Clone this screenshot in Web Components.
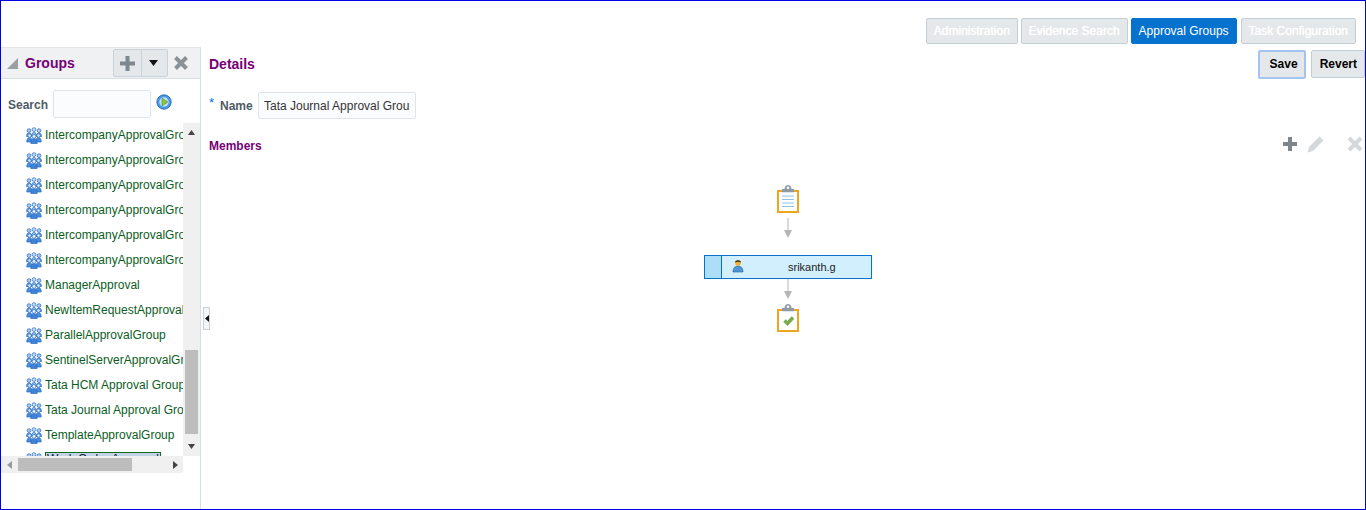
<!DOCTYPE html>
<html>
<head>
<meta charset="utf-8">
<title>Approval Groups</title>
<style>
  html, body { margin: 0; padding: 0; background: #fff; }
  body { font-family: "Liberation Sans", Arial, sans-serif; font-size: 12px; color: #333; }
</style>
</head>
<body>
<approval-app></approval-app>
<script>
const groupIcon = `<svg width="16" height="17" viewBox="0 0 16 17">
  <g stroke="#2a6cc0" stroke-width=".7">
    <path d="M.5 9.500c0-2.500 1-3.500 2.500-3.500s2.500 1 2.500 3.500z" fill="#6aa4e6"/>
    <path d="M10.500 9.500c0-2.500 1-3.500 2.500-3.500s2.500 1 2.500 3.500z" fill="#6aa4e6"/>
    <path d="M5.500 9c0-2.500 1-3.500 2.500-3.500s2.500 1 2.500 3.500z" fill="#8dbcf0"/>
    <circle cx="3" cy="3.600" r="1.900" fill="#a5c8f0"/>
    <circle cx="13" cy="3.600" r="1.900" fill="#a5c8f0"/>
    <circle cx="8" cy="2.600" r="1.900" fill="#c5dcf5"/>
    <path d="M.8 15c0-3 1-4.500 2.700-4.500s2.700 1.500 2.700 4.500z" fill="#4a8cdc"/>
    <path d="M9.800 15c0-3 1-4.500 2.700-4.500s2.700 1.500 2.700 4.500z" fill="#4a8cdc"/>
    <path d="M4.800 16.500c0-3.500 1.200-5 3.200-5s3.200 1.500 3.200 5z" fill="#3f83d6"/>
    <circle cx="3.500" cy="8.600" r="1.800" fill="#d4e6f8"/>
    <circle cx="12.500" cy="8.600" r="1.800" fill="#d4e6f8"/>
    <circle cx="8" cy="9.400" r="1.900" fill="#e6f1fb"/>
  </g></svg>`;

class AppTab extends HTMLElement {
  constructor() {
    super();
    this.attachShadow({ mode: "open" }).innerHTML = `
<style>
  :host { display: block; height: 26px; box-sizing: border-box; padding: 0 7px; border: 1px solid #c4ced7; border-radius: 2px;
    background: #e4e8ea; color: #fff; font: 12px/24px "Liberation Sans", Arial, sans-serif; white-space: nowrap; text-shadow: 0 0 1px #fff; }
  :host([active]) { background: #0572ce; border-color: #0572ce; color: #fff; text-shadow: none; }
  :host(:last-child) { margin-left: 1px; }
</style><slot></slot>`;
  }
}
customElements.define("app-tab", AppTab);

class AppButton extends HTMLElement {
  constructor() {
    super();
    this.attachShadow({ mode: "open" }).innerHTML = `
<style>
  :host { display: block; height: 28px; box-sizing: border-box; padding: 0 7px 0 8px; border: 1px solid #c4ced7; border-radius: 2px;
    background: #e4e8ea; color: #000; font: bold 12px/26px "Liberation Sans", Arial, sans-serif; }
  :host([focused]) { height: 29px; border: 2px solid #a3c4f0; line-height: 25px; padding: 0 6px 0 10px; }
</style><slot></slot>`;
  }
}
customElements.define("app-button", AppButton);

class GroupRow extends HTMLElement {
  constructor() {
    super();
    this.attachShadow({ mode: "open" }).innerHTML = `
<style>
  :host { display: flex; align-items: center; height: 25px; padding-left: 25px; gap: 3px; white-space: nowrap; color: #0b5d1e;
    font: 12px "Liberation Sans", Arial, sans-serif; flex: none; }
  svg { display: block; flex: none; }
  span { display: block; margin-bottom: 2px; }
  :host([selected]) span { align-self: flex-start; margin: 4px 0 0; width: 116px; height: 18px; box-sizing: border-box; border: 1px solid #0b6b1e; background: #c3d3e6; color: #123; padding-left: 1px; line-height: 13px; overflow: hidden; }
</style>${groupIcon}<span><slot></slot></span>`;
  }
}
customElements.define("group-row", GroupRow);

class GroupsPanel extends HTMLElement {
  constructor() {
    super();
    const names = [
      "IntercompanyApprovalGroup1", "IntercompanyApprovalGroup2", "IntercompanyApprovalGroup3",
      "IntercompanyApprovalGroup4", "IntercompanyApprovalGroup5", "IntercompanyApprovalGroup6",
      "ManagerApproval", "NewItemRequestApprovalGroup", "ParallelApprovalGroup",
      "SentinelServerApprovalGroup", "Tata HCM Approval Group", "Tata Journal Approval Group",
      "TemplateApprovalGroup"
    ];
    this.attachShadow({ mode: "open" }).innerHTML = `
<style>
  :host { display: flex; flex-direction: column; width: 200px; box-sizing: border-box; border-right: 1px solid #d6dfe6; flex: none; font: 12px "Liberation Sans", Arial, sans-serif; }
  .head { display: flex; align-items: center; height: 32px; box-sizing: border-box; background: #f0f1f2; border-top: 1px solid #e2e5e8; border-bottom: 1px solid #d6dfe6; flex: none; }
  .tri { margin: 0 0 0 6px; }
  h2 { margin: 0 0 0 7px; font: bold 14px "Liberation Sans", Arial, sans-serif; color: #770077; width: 88px; }
  .tools { display: flex; width: 55px; height: 28px; box-sizing: border-box; border: 1px solid #c9d2da; border-radius: 2px; background: #e4e8ea; }
  .tools div { display: flex; align-items: center; justify-content: center; }
  .tools div:first-child { width: 27px; border-right: 1px solid #c9d2da; }
  .tools div:last-child { flex: 1; padding-right: 2px; }
  .close { margin-left: 5px; display: block; }
  .search { display: flex; align-items: center; height: 44px; box-sizing: border-box; padding: 11px 0 5px 7px; flex: none; }
  .search label { font-weight: bold; color: #4f5a66; width: 45px; padding-top: 2px; }
  .search .box { width: 98px; height: 28px; box-sizing: border-box; border: 1px solid #dfe4ea; border-radius: 2px; background: #fbfcfe; }
  .search svg { margin-left: 5px; margin-top: -4px; }
  .listwrap { display: flex; height: 333px; flex: none; }
  .list { width: 182px; overflow: hidden; display: flex; flex-direction: column; flex: none; }
  .vbar { width: 17px; background: #f0f0f0; display: flex; flex-direction: column; align-items: center; flex: none; }
  .vbar .up { height: 227px; width: 100%; flex: none; }
  .vbar .thumb { width: 13px; height: 84px; background: #bdbdbd; flex: none; }
  .hbar { display: flex; align-items: center; width: 182px; height: 17px; background: #f0f0f0; flex: none; }
  .hbar .thumb { width: 114px; height: 13px; background: #bdbdbd; margin-left: 6px; }
  .arr { flex: none; display: block; }
</style>
<div class="head">
  <svg class="tri" width="11" height="11" viewBox="0 0 11 11"><path d="M11 0v11H0z" fill="#9a9fa4"/></svg>
  <h2>Groups</h2>
  <div class="tools">
    <div><svg width="15" height="15" viewBox="0 0 15 15"><path d="M5.500 0h4v5.500H15v4H9.500V15h-4V9.500H0v-4h5.500z" fill="#7f878e"/></svg></div>
    <div><svg width="9" height="6" viewBox="0 0 9 6"><path d="M0 0h9L4.500 6z" fill="#111"/></svg></div>
  </div>
  <svg class="close" width="16" height="16" viewBox="0 0 16 16"><path d="M2.500 2.500l11 11M13.500 2.500l-11 11" stroke="#8a9197" stroke-width="4"/></svg>
</div>
<div class="search">
  <label>Search</label><div class="box"></div>
  <svg width="16" height="16" viewBox="0 0 17 17"><circle cx="8.500" cy="8.500" r="7.600" fill="#4a9be6" stroke="#2267b5"/><circle cx="8.500" cy="8.500" r="5" fill="#bfe0f7"/><path d="M6.500 4.500v8l6-4z" fill="#8ccb3f" stroke="#4d8a1c" stroke-width=".7"/></svg>
</div>
<div class="listwrap">
  <div class="list">
    ${names.map((n) => `<group-row>${n}</group-row>`).join("")}
    <group-row selected>Work Order Approval</group-row>
  </div>
  <div class="vbar">
    <div class="up"><svg class="arr" style="margin:7px 0 0 5px" width="7" height="5" viewBox="0 0 7 5"><path d="M0 5h7L3.500 0z" fill="#444"/></svg></div>
    <div class="thumb"></div>
    <svg class="arr" style="margin-top:10px" width="7" height="5" viewBox="0 0 7 5"><path d="M0 0h7L3.500 5z" fill="#444"/></svg>
  </div>
</div>
<div class="hbar">
  <svg class="arr" style="margin-left:6px" width="5" height="8" viewBox="0 0 5 8"><path d="M5 0v8L0 4z" fill="#999"/></svg>
  <div class="thumb"></div>
  <svg class="arr" style="margin-left:41px" width="5" height="8" viewBox="0 0 5 8"><path d="M0 0v8l5-4z" fill="#444"/></svg>
</div>`;
  }
}
customElements.define("groups-panel", GroupsPanel);

class FlowDiagram extends HTMLElement {
  constructor() {
    super();
    const clip = (inner) => `<svg class="clip" width="24" height="29" viewBox="0 0 24 29">
      <path d="M6 6H2v21h20V6h-4" fill="#fff" stroke="#eea620" stroke-width="2"/>
      <path d="M6 4h2.500c0-5.300 7-5.300 7 0H18v3.300H6z" fill="#8f9aa5"/><circle cx="12" cy="2.800" r="1.300" fill="#fff"/>
      ${inner}</svg>`;
    const arrow = (cls) => `<svg class="${cls}" width="10" height="20" viewBox="0 0 10 20"><path d="M5 0v13" stroke="#b5b5b5" stroke-width="1"/><path d="M1 12h8l-4 8z" fill="#b5b5b5"/></svg>`;
    this.attachShadow({ mode: "open" }).innerHTML = `
<style>
  :host { display: flex; flex-direction: column; align-items: center; width: 168px; font: 11px "Liberation Sans", Arial, sans-serif; }
  svg { display: block; flex: none; }
  .node { display: flex; align-items: stretch; width: 168px; height: 24px; box-sizing: border-box; border: 1px solid #0572ce; background: #d2effd; }
  .cell { width: 16px; background: #acdff7; border-right: 1px solid #0572ce; flex: none; }
  .node .user { margin: 3px 0 0 10px; }
  .node span { margin-left: 44px; line-height: 23px; color: #222; }
  .a { margin: 4px 0 17px; }
  .b { margin: 0 0 5px; }
</style>
${clip(`<path d="M6 11h12M6 14.500h12M6 18h12M6 21.500h12" stroke="#8fc0e8" stroke-width="1"/>`)}
${arrow("a")}
<div class="node"><div class="cell"></div>
  <svg class="user" width="12" height="14" viewBox="0 0 12 14"><path d="M1 13c0-4 2-6 5-6s5 2 5 6z" fill="#4f97d8" stroke="#235f9c" stroke-width=".6"/><circle cx="6" cy="4" r="2.800" fill="#f0b030"/><path d="M3 3.500C3 .5 9 .5 9 3.500 7 2.500 5 2.500 3 3.500z" fill="#3a2a1a"/></svg>
  <span>srikanth.g</span></div>
${arrow("b")}
${clip(`<path d="M8.500 16.500l3 3 5.500-6" fill="none" stroke="#77ab4e" stroke-width="3.500"/>`)}`;
  }
}
customElements.define("flow-diagram", FlowDiagram);

class DetailsPanel extends HTMLElement {
  constructor() {
    super();
    this.attachShadow({ mode: "open" }).innerHTML = `
<style>
  :host { display: flex; flex-direction: column; flex: 1; min-width: 0; padding: 0 0 0 8px; font: 12px "Liberation Sans", Arial, sans-serif; }
  .top { display: flex; align-items: center; justify-content: space-between; height: 34px; flex: none; }
  h2 { margin: 0; font: bold 14px "Liberation Sans", Arial, sans-serif; color: #770077; }
  .actions { display: flex; align-items: center; gap: 5px; }
  .name { display: flex; align-items: center; height: 30px; margin-top: 9px; flex: none; }
  .star { color: #0572ce; width: 11px; margin-top: -6px; font-size: 13px; }
  label { font-weight: bold; color: #4f5a66; width: 38px; padding-top: 2px; }
  .input { width: 158px; height: 27px; box-sizing: border-box; border: 1px solid #dfe4ea; border-radius: 2px; background: #fbfcfe; color: #333; line-height: 27px; padding: 0 5px; }
  .input div { overflow: hidden; white-space: nowrap; height: 25px; }
  .members { display: flex; align-items: center; justify-content: space-between; height: 24px; margin-top: 13px; flex: none; }
  h3 { margin: 2px 0 0; font: bold 12px "Liberation Sans", Arial, sans-serif; color: #770077; }
  .icons { display: flex; align-items: center; margin: -2px 2px 0 0; }
  .diagram { display: flex; margin: 28px 0 0 495px; }
</style>
<div class="top"><h2>Details</h2><div class="actions"><app-button focused>Save</app-button><app-button>Revert</app-button></div></div>
<div class="name"><span class="star">*</span><label>Name</label><div class="input"><div>Tata Journal Approval Group</div></div></div>
<div class="members"><h3>Members</h3>
  <div class="icons">
    <svg width="14" height="14" viewBox="0 0 14 14"><path d="M5 0h4v5h5v4H9v5H5V9H0V5h5z" fill="#7f878e"/></svg>
    <svg style="margin-left:10px" width="17" height="17" viewBox="0 0 17 17"><path d="M12.500 .5l4 4L6 15 .5 16.500 2 11z" fill="#d5d8db"/></svg>
    <svg style="margin-left:23px" width="16" height="16" viewBox="0 0 16 16"><path d="M2 2l12 12M14 2L2 14" stroke="#d5d8db" stroke-width="4"/></svg>
  </div></div>
<div class="diagram"><flow-diagram></flow-diagram></div>`;
  }
}
customElements.define("details-panel", DetailsPanel);

class ApprovalApp extends HTMLElement {
  constructor() {
    super();
    this.attachShadow({ mode: "open" }).innerHTML = `
<style>
  :host { display: flex; flex-direction: column; width: 1366px; height: 510px; box-sizing: border-box; border: 1px solid #0000e6; overflow: hidden; position: relative; background: #fff; }
  .tabs { display: flex; justify-content: flex-end; gap: 3px; height: 46px; box-sizing: border-box; padding: 17px 9px 0 0; flex: none; }
  .main { display: flex; flex: 1; min-height: 0; }
  .handle { position: absolute; left: 202px; top: 306px; width: 7px; height: 23px; box-sizing: border-box; border: 1px solid #c9d0d6; background: #f4f5f6; display: flex; align-items: center; justify-content: center; }
</style>
<div class="tabs">
  <app-tab>Administration</app-tab><app-tab>Evidence Search</app-tab><app-tab active>Approval Groups</app-tab><app-tab>Task Configuration</app-tab>
</div>
<div class="main"><groups-panel></groups-panel><details-panel></details-panel></div>
<div class="handle"><svg width="4" height="7" viewBox="0 0 4 7"><path d="M4 0v7L0 3.500z" fill="#111"/></svg></div>`;
  }
}
customElements.define("approval-app", ApprovalApp);
</script>
</body>
</html>
